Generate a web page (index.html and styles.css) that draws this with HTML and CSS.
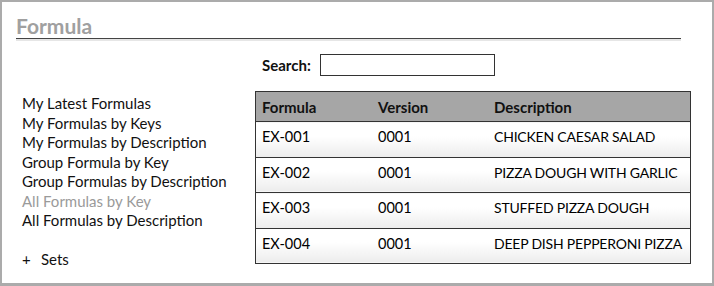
FILE: index.html
```html
<!DOCTYPE html>
<html lang="en">
<head>
    <meta charset="UTF-8">
    <meta name="viewport" content="width=device-width, initial-scale=1.0">
    <title>Formula</title>
    <link rel="stylesheet" href="styles.css">
</head>
<body>
    <div class="frame">
        <h2 class="title">Formula</h2>
        <div class="search">
            <label for="searchBox">Search:</label>
            <input type="text" id="searchBox">
        </div>
        <div class="content">
            <ul class="nav">
                <li>My Latest Formulas</li>
                <li>My Formulas by Keys</li>
                <li>My Formulas by Description</li>
                <li>Group Formula by Key</li>
                <li>Group Formulas by Description</li>
                <li class="muted">All Formulas by Key</li>
                <li>All Formulas by Description</li>
                <li class="sets"><span class="plus">+</span>Sets</li>
            </ul>
            <table class="formulas">
                <thead>
                    <tr><th>Formula</th><th>Version</th><th>Description</th></tr>
                </thead>
                <tbody>
                    <tr><td>EX-001</td><td>0001</td><td class="desc">CHICKEN CAESAR SALAD</td></tr>
                    <tr><td>EX-002</td><td>0001</td><td class="desc">PIZZA DOUGH WITH GARLIC</td></tr>
                    <tr><td>EX-003</td><td>0001</td><td class="desc">STUFFED PIZZA DOUGH</td></tr>
                    <tr><td>EX-004</td><td>0001</td><td class="desc">DEEP DISH PEPPERONI PIZZA</td></tr>
                </tbody>
            </table>
        </div>
    </div>
</body>
</html>
```

FILE: styles.css
```css
body {
    margin: 0;
    font-family: 'Lato', sans-serif;
    color: #111;
    background-color: #fff;
}

.frame {
    width: 714px;
    height: 286px;
    box-sizing: border-box;
    border: 2px solid #ababab;
    border-bottom-width: 3px;
    padding: 0 0 0 14px;
}

.title {
    width: 665px;
    margin: 12px 0 0 0;
    padding-bottom: 1px;
    font-size: 21px;
    font-weight: bold;
    color: #a0a0a0;
    line-height: 23px;
    border-bottom: 1px solid #444;
    box-shadow: 0 2px 0 #e6e6e6;
}

.search {
    display: flex;
    align-items: center;
    margin: 15px 0 0 246px;
    font-size: 15px;
    font-weight: bold;
}

.search input {
    width: 175px;
    height: 22px;
    box-sizing: border-box;
    margin-left: 9px;
    border: 1px solid #333;
    padding: 0;
}

.content {
    display: flex;
    align-items: flex-start;
    margin-top: 15px;
}

.nav {
    list-style: none;
    margin: 3px 0 0 6px;
    padding: 0;
    width: 233px;
    font-size: 15px;
    line-height: 19.5px;
}

.nav .muted {
    color: #9a9a9a;
}

.nav .sets {
    margin-top: 19px;
}

.plus {
    display: inline-block;
    width: 19px;
}

.formulas {
    border-collapse: collapse;
    table-layout: fixed;
    width: 436px;
    font-size: 15px;
    border: 1px solid #333;
    white-space: nowrap;
}

.formulas th {
    background-color: #a6a6a6;
    text-align: left;
    height: 29px;
    padding: 0 6px;
    font-weight: bold;
}

.formulas td {
    box-sizing: border-box;
    height: 35.5px;
    padding: 6px 6px 0 6px;
    vertical-align: top;
    font-size: 14.5px;
    line-height: 18px;
    color: #000;
    border-top: 1px solid #333;
    background: linear-gradient(#fff, #fff 40%, #ececec);
}

.formulas td.desc {
    font-size: 14px;
    letter-spacing: -0.2px;
}

.formulas th:nth-child(1) { width: 104px; }
.formulas th:nth-child(2) { width: 104px; }
```
